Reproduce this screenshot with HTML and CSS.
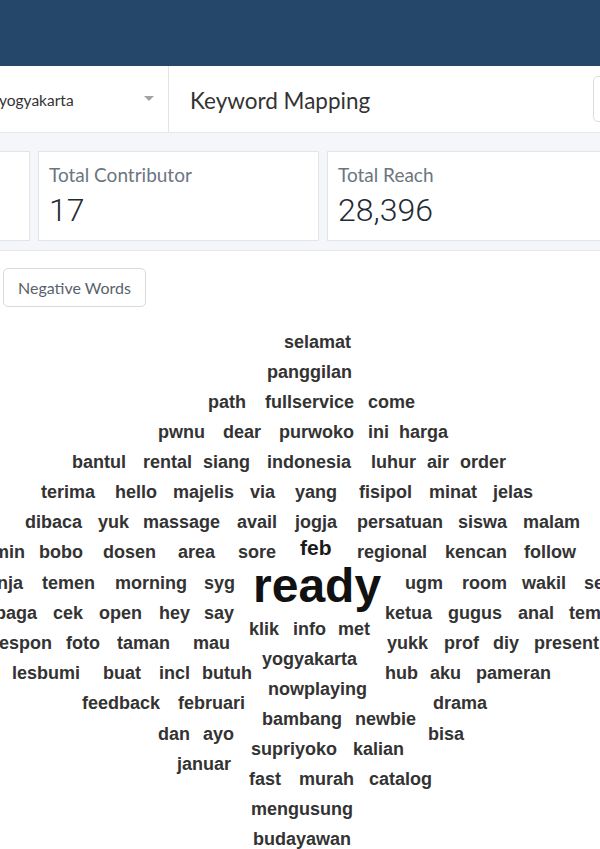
FILE: index.html
```html
<!DOCTYPE html>
<html lang="id">
<head>
<meta charset="utf-8">
<title>Keyword Mapping</title>
<link rel="stylesheet" href="styles.css">
</head>
<body>
<div class="page">
  <header class="topbar"></header>

  <div class="filterbar">
    <div class="select">
      <span class="select-value">yogyakarta</span>
      <span class="caret"></span>
    </div>
    <div class="title">Keyword Mapping</div>
    <div class="rightbox"></div>
  </div>

  <section class="stats">
    <div class="cards">
      <div class="card"></div>
      <div class="card">
        <div class="card-label">Total Contributor</div>
        <div class="card-value">17</div>
      </div>
      <div class="card">
        <div class="card-label">Total Reach</div>
        <div class="card-value">28,396</div>
      </div>
    </div>
  </section>

  <div class="actions">
    <button class="btn" type="button">Negative Words</button>
  </div>

  <div class="cloud">
    <span class="w" style="left:284px;top:13px">selamat</span>
    <span class="w" style="left:267px;top:43px">panggilan</span>

    <span class="w" style="left:208px;top:73px">path</span>
    <span class="w" style="left:265px;top:73px">fullservice</span>
    <span class="w" style="left:368px;top:73px">come</span>

    <span class="w" style="left:158px;top:103px">pwnu</span>
    <span class="w" style="left:223px;top:103px">dear</span>
    <span class="w" style="left:279px;top:103px">purwoko</span>
    <span class="w" style="left:368px;top:103px">ini</span>
    <span class="w" style="left:399px;top:103px">harga</span>

    <span class="w" style="left:72px;top:133px">bantul</span>
    <span class="w" style="left:143px;top:133px">rental</span>
    <span class="w" style="left:203px;top:133px">siang</span>
    <span class="w" style="left:267px;top:133px">indonesia</span>
    <span class="w" style="left:371px;top:133px">luhur</span>
    <span class="w" style="left:427px;top:133px">air</span>
    <span class="w" style="left:460px;top:133px">order</span>

    <span class="w" style="left:41px;top:163px">terima</span>
    <span class="w" style="left:115px;top:163px">hello</span>
    <span class="w" style="left:173px;top:163px">majelis</span>
    <span class="w" style="left:250px;top:163px">via</span>
    <span class="w" style="left:295px;top:163px">yang</span>
    <span class="w" style="left:359px;top:163px">fisipol</span>
    <span class="w" style="left:429px;top:163px">minat</span>
    <span class="w" style="left:493px;top:163px">jelas</span>

    <span class="w" style="left:25px;top:193px">dibaca</span>
    <span class="w" style="left:98px;top:193px">yuk</span>
    <span class="w" style="left:143px;top:193px">massage</span>
    <span class="w" style="left:237px;top:193px">avail</span>
    <span class="w" style="left:295px;top:193px">jogja</span>
    <span class="w" style="left:357px;top:193px">persatuan</span>
    <span class="w" style="left:458px;top:193px">siswa</span>
    <span class="w" style="left:523px;top:193px">malam</span>

    <span class="w" style="left:-28px;top:223px">admin</span>
    <span class="w" style="left:39px;top:223px">bobo</span>
    <span class="w" style="left:103px;top:223px">dosen</span>
    <span class="w" style="left:178px;top:223px">area</span>
    <span class="w" style="left:238px;top:223px">sore</span>
    <span class="w w-md" style="left:300px;top:217px">feb</span>
    <span class="w" style="left:357px;top:223px">regional</span>
    <span class="w" style="left:445px;top:223px">kencan</span>
    <span class="w" style="left:524px;top:223px">follow</span>

    <span class="w" style="left:-23px;top:254px">senja</span>
    <span class="w" style="left:42px;top:254px">temen</span>
    <span class="w" style="left:115px;top:254px">morning</span>
    <span class="w" style="left:204px;top:254px">syg</span>
    <span class="w w-xl" style="left:253px;top:242px">ready</span>
    <span class="w" style="left:405px;top:254px">ugm</span>
    <span class="w" style="left:462px;top:254px">room</span>
    <span class="w" style="left:522px;top:254px">wakil</span>
    <span class="w" style="left:584px;top:254px">semua</span>

    <span class="w" style="left:-36px;top:284px">lembaga</span>
    <span class="w" style="left:53px;top:284px">cek</span>
    <span class="w" style="left:99px;top:284px">open</span>
    <span class="w" style="left:159px;top:284px">hey</span>
    <span class="w" style="left:204px;top:284px">say</span>
    <span class="w" style="left:385px;top:284px">ketua</span>
    <span class="w" style="left:448px;top:284px">gugus</span>
    <span class="w" style="left:518px;top:284px">anal</span>
    <span class="w" style="left:569px;top:284px">tempat</span>

    <span class="w" style="left:249px;top:300px">klik</span>
    <span class="w" style="left:293px;top:300px">info</span>
    <span class="w" style="left:338px;top:300px">met</span>

    <span class="w" style="left:-8px;top:314px">respon</span>
    <span class="w" style="left:66px;top:314px">foto</span>
    <span class="w" style="left:117px;top:314px">taman</span>
    <span class="w" style="left:193px;top:314px">mau</span>
    <span class="w" style="left:387px;top:314px">yukk</span>
    <span class="w" style="left:444px;top:314px">prof</span>
    <span class="w" style="left:493px;top:314px">diy</span>
    <span class="w" style="left:534px;top:314px">present</span>

    <span class="w" style="left:262px;top:330px">yogyakarta</span>

    <span class="w" style="left:12px;top:344px">lesbumi</span>
    <span class="w" style="left:103px;top:344px">buat</span>
    <span class="w" style="left:159px;top:344px">incl</span>
    <span class="w" style="left:202px;top:344px">butuh</span>
    <span class="w" style="left:385px;top:344px">hub</span>
    <span class="w" style="left:430px;top:344px">aku</span>
    <span class="w" style="left:476px;top:344px">pameran</span>

    <span class="w" style="left:268px;top:360px">nowplaying</span>

    <span class="w" style="left:82px;top:374px">feedback</span>
    <span class="w" style="left:178px;top:374px">februari</span>
    <span class="w" style="left:433px;top:374px">drama</span>

    <span class="w" style="left:262px;top:390px">bambang</span>
    <span class="w" style="left:355px;top:390px">newbie</span>

    <span class="w" style="left:158px;top:405px">dan</span>
    <span class="w" style="left:203px;top:405px">ayo</span>
    <span class="w" style="left:428px;top:405px">bisa</span>

    <span class="w" style="left:251px;top:420px">supriyoko</span>
    <span class="w" style="left:353px;top:420px">kalian</span>

    <span class="w" style="left:177px;top:435px">januar</span>

    <span class="w" style="left:249px;top:450px">fast</span>
    <span class="w" style="left:299px;top:450px">murah</span>
    <span class="w" style="left:369px;top:450px">catalog</span>

    <span class="w" style="left:251px;top:480px">mengusung</span>
    <span class="w" style="left:253px;top:510px">budayawan</span>
  </div>
</div>
</body>
</html>
```

FILE: styles.css
```css
html, body {
  margin: 0;
  padding: 0;
  background: #ffffff;
}

body {
  width: 600px;
  height: 849px;
  overflow: hidden;
  font-family: Lato, "Open Sans", sans-serif;
  color: #333333;
}

.page {
  width: 600px;
  overflow: hidden;
}

.topbar {
  height: 66px;
  background: #25476a;
}

.filterbar {
  display: flex;
  align-items: center;
  height: 66px;
  background: #ffffff;
  border-bottom: 1px solid #e6e9ee;
  width: 720px;
}

.select {
  box-sizing: border-box;
  flex: 0 0 169px;
  height: 66px;
  display: flex;
  align-items: center;
  justify-content: space-between;
  padding-right: 14px;
  border-right: 1px solid #e4e4e4;
}

.select-value {
  font-size: 15.5px;
  color: #333333;
  margin-left: -1px;
  margin-top: 2px;
}

.caret {
  width: 0;
  height: 0;
  border-left: 5px solid transparent;
  border-right: 5px solid transparent;
  border-top: 5px solid #a3a3a3;
  margin-top: -2px;
}

.title {
  box-sizing: border-box;
  flex: 0 0 424px;
  padding-left: 21px;
  font-size: 22.5px;
  color: #333333;
  margin-top: 2px;
}

.rightbox {
  box-sizing: border-box;
  width: 110px;
  height: 46px;
  border: 1px solid #dcdcdc;
  border-radius: 5px;
}

.stats {
  background: #f4f6f9;
  padding: 18px 0 9px;
  border-bottom: 1px solid #e4e8ec;
}

.cards {
  display: flex;
  gap: 8px;
  margin-left: -251px;
  width: 900px;
}

.card {
  box-sizing: border-box;
  flex: 0 0 281px;
  height: 90px;
  background: #ffffff;
  border: 1px solid #e1e6eb;
  padding: 10px 10px;
}

.card-label {
  font-size: 19px;
  line-height: 26px;
  color: #6b7581;
}

.card-value {
  font-family: Roboto, "Open Sans", sans-serif;
  font-weight: 300;
  font-size: 32px;
  line-height: 38px;
  margin-top: 3px;
  color: #222a33;
}

.actions {
  padding: 17px 0 0 3px;
}

.btn {
  box-sizing: border-box;
  height: 39px;
  padding: 0 14px;
  background: #ffffff;
  border: 1px solid #dadada;
  border-radius: 5px;
  font-family: Lato, "Open Sans", sans-serif;
  font-size: 16px;
  color: #59626d;
  cursor: pointer;
}

.cloud {
  position: relative;
  height: 530px;
  margin-top: 13px;
}

.w {
  position: absolute;
  white-space: nowrap;
  font-family: "Liberation Sans", Arial, sans-serif;
  font-weight: bold;
  font-size: 18px;
  line-height: 1;
  color: #333333;
}

.w-md {
  font-size: 21px;
  color: #1a1a1a;
}

.w-xl {
  font-size: 48px;
  color: #111111;
}
```
